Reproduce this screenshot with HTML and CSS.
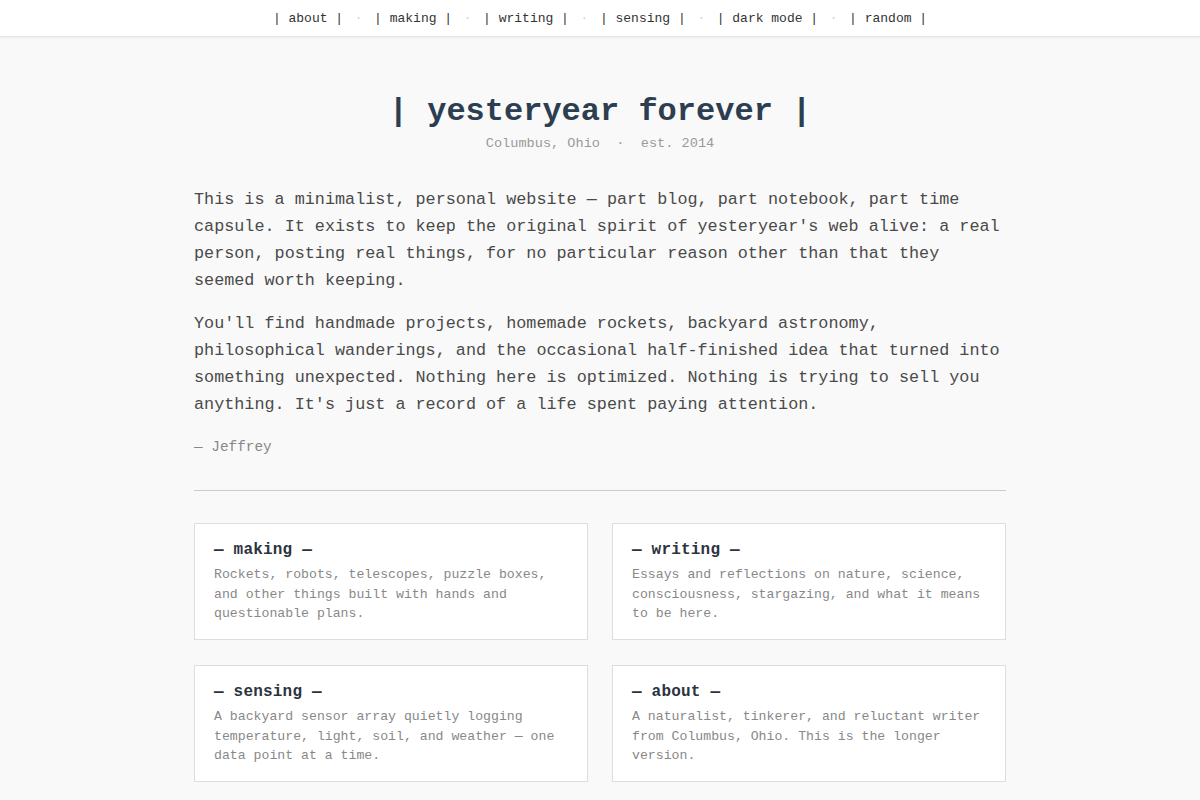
FILE: index.html
```html
<!DOCTYPE html>
<html lang="en">
<head>
<meta charset="utf-8">
<title>yesteryear forever</title>
<link rel="stylesheet" href="styles.css">
</head>
<body>
<nav class="topnav">
  <a class="navlink" href="#">| about |</a><span class="sep">·</span>
  <a class="navlink" href="#">| making |</a><span class="sep">·</span>
  <a class="navlink" href="#">| writing |</a><span class="sep">·</span>
  <a class="navlink" href="#">| sensing |</a><span class="sep">·</span>
  <a class="navlink" href="#">| dark mode |</a><span class="sep">·</span>
  <a class="navlink" href="#">| random |</a>
</nav>
<main class="page">
  <header class="masthead">
    <h1 class="title">| yesteryear forever |</h1>
    <p class="subtitle">Columbus, Ohio  ·  est. 2014</p>
  </header>
  <section class="intro">
    <p>This is a minimalist, personal website — part blog, part notebook, part time capsule. It exists to keep the original spirit of yesteryear's web alive: a real person, posting real things, for no particular reason other than that they seemed worth keeping.</p>
    <p>You'll find handmade projects, homemade rockets, backyard astronomy, philosophical wanderings, and the occasional half-finished idea that turned into something unexpected. Nothing here is optimized. Nothing is trying to sell you anything. It's just a record of a life spent paying attention.</p>
    <p class="signature">— Jeffrey</p>
  </section>
  <hr class="rule">
  <section class="cards">
    <a class="card" href="#">
      <h2 class="card-title">— making —</h2>
      <p class="card-text">Rockets, robots, telescopes, puzzle boxes, and other things built with hands and questionable plans.</p>
    </a>
    <a class="card" href="#">
      <h2 class="card-title">— writing —</h2>
      <p class="card-text">Essays and reflections on nature, science, consciousness, stargazing, and what it means to be here.</p>
    </a>
    <a class="card" href="#">
      <h2 class="card-title">— sensing —</h2>
      <p class="card-text">A backyard sensor array quietly logging temperature, light, soil, and weather — one data point at a time.</p>
    </a>
    <a class="card" href="#">
      <h2 class="card-title">— about —</h2>
      <p class="card-text">A naturalist, tinkerer, and reluctant writer from Columbus, Ohio. This is the longer version.</p>
    </a>
  </section>
</main>
</body>
</html>
```

FILE: styles.css
```css
html, body {
  margin: 0;
  padding: 0;
}
body {
  background: #f9f9f9;
  font-family: "Liberation Mono", "Courier New", monospace;
  color: #444;
}
.topnav {
  height: 36px;
  background: #fff;
  border-bottom: 1px solid #e4e4e4;
  box-shadow: 0 1px 3px rgba(0,0,0,0.05);
  display: flex;
  justify-content: center;
  align-items: center;
  font-size: 13px;
}
.navlink {
  color: #333;
  text-decoration: none;
  white-space: pre;
}
.sep {
  color: #c8c8c8;
  margin: 0 12.2px;
  font-size: 11px;
}
.page {
  width: 812px;
  margin: 0 auto;
  padding-top: 56px;
}
.masthead {
  text-align: center;
}
.title {
  margin: 0;
  font-size: 32px;
  line-height: 38px;
  font-weight: bold;
  color: #2c3e50;
}
.subtitle {
  margin: 3px 0 0;
  font-size: 13.6px;
  line-height: 20px;
  color: #999;
  white-space: pre;
}
.intro {
  margin-top: 33px;
}
.intro p {
  margin: 0 0 16.8px;
  font-size: 16.8px;
  line-height: 26.9px;
  color: #4a4a4a;
}
.intro .signature {
  margin-top: 15px;
  font-size: 14.4px;
  line-height: 22px;
  color: #888;
}
.rule {
  border: 0;
  border-top: 1px solid #ccc;
  margin: 32px 0 32px;
}
.cards {
  display: grid;
  grid-template-columns: 1fr 1fr;
  column-gap: 24px;
  row-gap: 25px;
}
.card {
  display: block;
  background: #fff;
  border: 1px solid #ddd;
  padding: 16px 19px 15px;
  text-decoration: none;
}
.card-title {
  margin: 0 0 5.5px;
  font-size: 16px;
  line-height: 20px;
  font-weight: bold;
  letter-spacing: 0.2px;
  color: #2c3340;
}
.card-text {
  margin: 0;
  font-size: 13.2px;
  line-height: 19.5px;
  color: #888;
}
```
